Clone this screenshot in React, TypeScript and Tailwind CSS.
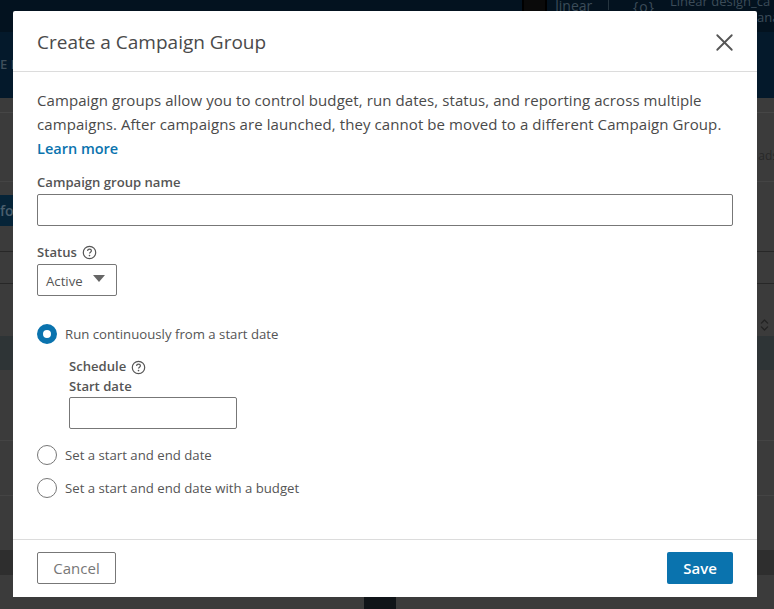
import { ChevronsUpDown, X } from "lucide-react";

const HelpIcon = () => (
  <svg width="15" height="15" viewBox="0 0 15 15" fill="none" className="shrink-0">
    <circle cx="7.5" cy="7.5" r="6.2" stroke="#555" strokeWidth="1.2" />
    <path d="M5.6 6c0-1.1.8-1.8 1.9-1.8s1.9.7 1.9 1.6c0 1.4-1.9 1.4-1.9 2.8" stroke="#555" strokeWidth="1.2" />
    <circle cx="7.5" cy="10.6" r=".8" fill="#555" />
  </svg>
);

const Radio = ({ label, checked = false }: { label: string; checked?: boolean }) => (
  <div className="flex items-center gap-[8px] h-[20px]">
    {checked ? (
      <span className="w-[20px] h-[20px] rounded-full border-[6px] border-[#0a73ae] bg-white" />
    ) : (
      <span className="w-[20px] h-[20px] rounded-full border border-[#777] bg-white" />
    )}
    <span className="pt-[1px] text-[13.2px] text-[#555]">{label}</span>
  </div>
);

const Backdrop = () => (
  <div className="w-full h-full flex flex-col bg-[#3b3b3b]">
    <div className="h-[32px] bg-[#03121f] flex text-[#3c4c59] text-[14px] overflow-hidden">
      <div className="ml-[522px] w-[31px] h-[14px] border-x-2 border-[#000] bg-[#0a0a0a]" />
      <span className="ml-[8px] h-[14px] leading-[12px]">linear</span>
      <span className="ml-[16px] w-px h-[10px] bg-[#26353f]" />
      <span className="ml-[24px] h-[14px] leading-[14px] tracking-[1px]">{"{o}"}</span>
      <div className="ml-[15px] w-[104px] -mt-[6px] leading-[14px] whitespace-nowrap flex flex-col text-[13px]">
        <span>Linear design_ca</span>
        <span className="ml-[87px] mt-[2px]">ana</span>
      </div>
    </div>
    <div className="h-[66px] bg-[#04192b] flex items-center text-[#3f4e5a] text-[13px] font-semibold">
      <span>E I</span>
    </div>
    <div className="h-[15px] border-b border-[#464646]" />
    <div className="h-[69px] border-b border-[#444] flex justify-end items-end pb-[16px] text-[#282828] text-[12px]">
      <span className="-mr-[4px]">ads</span>
    </div>
    <div className="h-[13px]" />
    <div className="h-[31px] w-[13px] bg-[#062438] text-[#4b5f6d] text-[14px] font-semibold overflow-hidden leading-[31px]">fo</div>
    <div className="h-[26px] border-b border-[#272727]" />
    <div className="h-[32px] border-b border-[#272727]" />
    <div className="h-[52px] flex justify-end items-end pr-[2px]">
      <ChevronsUpDown className="w-[15px] h-[22px] text-[#222]" />
    </div>
    <div className="h-[34px] bg-[#2e3436]" />
    <div className="h-[71px] border-b border-[#444]" />
    <div className="h-[55px] border-b border-[#444]" />
    <div className="h-[54px]" />
    <div className="h-[25px] bg-[#2e2e2e]" />
    <div className="h-[22px] mt-[12px] ml-[364px] w-[32px] bg-[#101418]" />
  </div>
);

export default function App() {
  return (
    <div className="relative w-[774px] h-[609px] overflow-hidden font-['Open_Sans','Noto_Sans',sans-serif]">
      <Backdrop />
      <div className="absolute left-[13px] top-[11px] w-[744px] h-[586px] bg-white flex flex-col rounded-t-[2px]">
        <div className="h-[61px] shrink-0 border-b border-[#dcdcdc] flex items-center justify-between pl-[24px] pr-[18px]">
          <h1 className="pt-[2px] text-[19px] text-[#4a4a4a] font-normal">Create a Campaign Group</h1>
          <X className="mt-[3px] w-[29px] h-[29px] text-[#555]" strokeWidth={1.5} />
        </div>

        <div className="flex-1 pl-[24px] pr-[24px] pt-[16px]">
          <p className="text-[15px] leading-[24px] text-[#4a4a4a] tracking-[0.08px]">
            Campaign groups allow you to control budget, run dates, status, and reporting across multiple campaigns.
            After campaigns are launched, they cannot be moved to a different Campaign Group.
          </p>
          <a className="block pt-[1px] text-[14.5px] leading-[24px] font-semibold text-[#0a73ae]">Learn more</a>

          <label className="block mt-[11px] text-[13.1px] leading-[20px] font-semibold text-[#555]">Campaign group name</label>
          <div className="mt-[2px] h-[32px] border border-[#777] rounded-[2px]" />

          <div className="mt-[16px] pt-[1px] flex items-center gap-[5px] h-[20px] text-[13.1px] font-semibold text-[#555]">
            Status <HelpIcon />
          </div>
          <div className="mt-[2px] w-[80px] h-[32px] border border-[#777] rounded-[2px] flex items-center pl-[8px] gap-[10px]">
            <span className="pt-[3px] text-[13.2px] text-[#555]">Active</span>
            <span className="w-0 h-0 border-x-[6px] border-x-transparent border-t-[7px] border-t-[#666] -mt-[3px]" />
          </div>

          <div className="mt-[28px]">
            <Radio label="Run continuously from a start date" checked />
          </div>
          <div className="mt-[13px] ml-[32px]">
            <div className="flex items-center gap-[5px] h-[20px] text-[13.1px] font-semibold text-[#555]">
              Schedule <HelpIcon />
            </div>
            <div className="h-[18px] text-[13.1px] leading-[18px] font-semibold text-[#555]">Start date</div>
            <div className="mt-[2px] w-[168px] h-[32px] border border-[#777] rounded-[2px]" />
          </div>
          <div className="mt-[16px]">
            <Radio label="Set a start and end date" />
          </div>
          <div className="mt-[13px]">
            <Radio label="Set a start and end date with a budget" />
          </div>
        </div>

        <div className="h-[58px] shrink-0 border-t border-[#dcdcdc] flex items-center justify-between px-[24px] pb-[1px]">
          <button className="w-[79px] h-[32px] border border-[#777] rounded-[2px] text-[15px] font-medium text-[#777]">Cancel</button>
          <button className="w-[66px] h-[32px] bg-[#0a73ae] rounded-[2px] text-[15px] font-semibold text-white">Save</button>
        </div>
      </div>
    </div>
  );
}
